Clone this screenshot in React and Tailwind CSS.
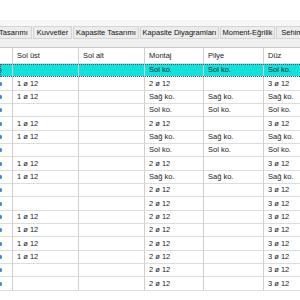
import React from 'react';

const tabs = [
  { label: 'Tasarımı', w: 'w-[37px]' },
  { label: 'Kuvvetler', w: 'w-[39px]' },
  { label: 'Kapasite Tasarımı', w: 'w-[66px]' },
  { label: 'Kapasite Diyagramları', w: 'w-[79px]' },
  { label: 'Moment-Eğrilik', w: 'w-[55px]' },
  { label: 'Sehim Kontrolü', w: 'w-[62px]' },
];

const cols = [
  { label: 'Sol üst', w: 'w-[66px]' },
  { label: 'Sol alt', w: 'w-[66px]' },
  { label: 'Montaj', w: 'w-[59px]' },
  { label: 'Pilye', w: 'w-[60px]' },
  { label: 'Düz', w: 'w-[60px]' },
];

const A = ['1 ø 12', '', '2 ø 12', '', '3 ø 12'];
const B = ['1 ø 12', '', 'Sağ ko.', 'Sağ ko.', 'Sağ ko.'];
const C = ['', '', 'Sol ko.', 'Sol ko.', 'Sol ko.'];
const D = ['', '', '2 ø 12', '', '3 ø 12'];

const rows = [C, A, B, C, A, B, C, A, B, D, D, A, A, A, A, D, D];

const heights = { 13: 'h-[13px]', 14: 'h-[14px]' };

const Row = ({ cells, selected, h }) => (
  <div className={`flex ${heights[h]} ${selected ? 'bg-[#12e2de] outline-1 outline-dotted outline-[#555] -outline-offset-1' : 'bg-white'}`}>
    <div className="w-[13px] shrink-0 border-r border-b border-r-[#cfcfcf] border-b-[#dcdcdc] flex items-center">
      <span className="w-[3px] h-[4px] -ml-[1px] rounded-full bg-[#3b8de0]" />
    </div>
    {cells.map((c, i) => (
      <div
        key={i}
        className={`${cols[i].w} shrink-0 border-r border-b border-r-[#cfcfcf] border-b-[#dcdcdc] pl-[4px] flex items-center whitespace-nowrap`}
      >
        {c}
      </div>
    ))}
  </div>
);

export default function App() {
  const top = 64;
  return (
    <div className="w-[300px] h-[300px] overflow-hidden bg-white text-[7.5px] text-[#222] font-['Liberation_Sans',Arial,sans-serif]">
      <div className="h-[20px] bg-white" />
      <div className="h-[6px] bg-[#f7f7f7]" />
      <div className="h-[13px] bg-[#f0f0f0] flex gap-px -ml-[5px] w-[320px]">
        {tabs.map((t) => (
          <div
            key={t.label}
            className={`${t.w} shrink-0 border border-[#d4d4d4] bg-[#ececec] flex items-center justify-center whitespace-nowrap text-[#111]`}
          >
            {t.label}
          </div>
        ))}
      </div>
      <div className="h-[9px] bg-[#f0f0f0] border-b border-[#c8c8c8]" />
      <div className="w-[340px]">
        <div className="flex h-[16px] bg-white">
          <div className="w-[13px] shrink-0 border-r border-b border-r-[#cfcfcf] border-b-[#dcdcdc]" />
          {cols.map((c) => (
            <div
              key={c.label}
              className={`${c.w} shrink-0 border-r border-b border-r-[#cfcfcf] border-b-[#dcdcdc] pl-[4px] flex items-center`}
            >
              {c.label}
            </div>
          ))}
        </div>
        {rows.map((r, i) => {
          const h = Math.round(top + 13.33 * (i + 1)) - Math.round(top + 13.33 * i);
          return <Row key={i} cells={r} selected={i === 0} h={h} />;
        })}
      </div>
    </div>
  );
}
